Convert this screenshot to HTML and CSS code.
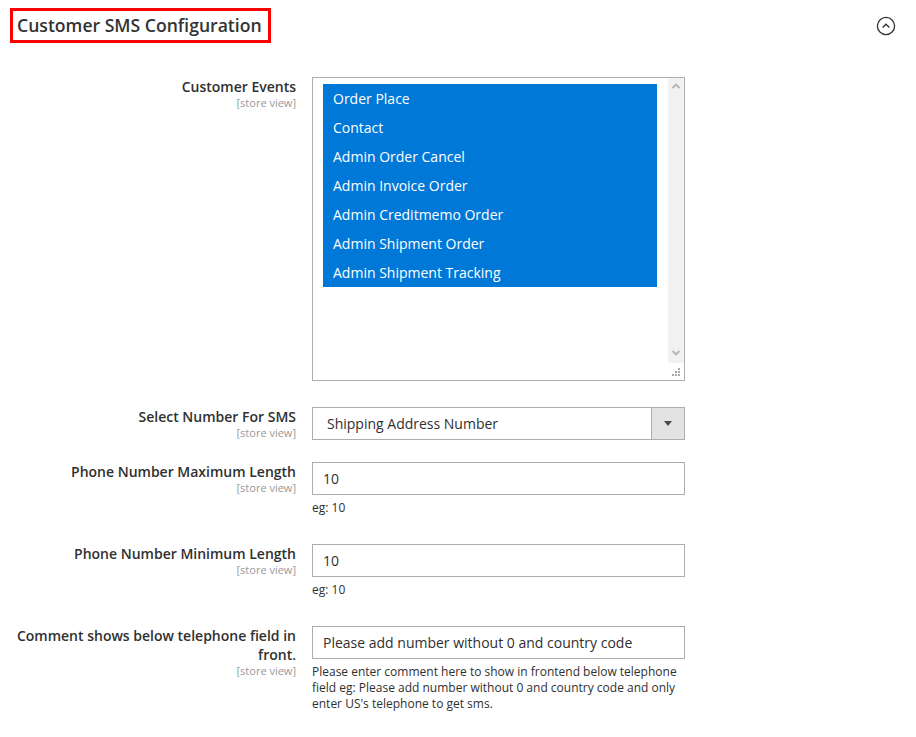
FILE: index.html
```html
<!DOCTYPE html>
<html lang="en">
<head>
    <meta charset="UTF-8">
    <meta name="viewport" content="width=device-width, initial-scale=1.0">
    <title>Customer SMS Configuration</title>
    <link rel="stylesheet" href="styles.css">
</head>
<body>
    <div class="section">
        <div class="section-head">
            <h3 class="section-title">Customer SMS Configuration</h3>
            <span class="toggle">
                <svg width="20" height="20" viewBox="0 0 20 20">
                    <circle cx="10" cy="10" r="8.6" fill="none" stroke="#333" stroke-width="1.3"/>
                    <path d="M6.6 11.6 L10 8.3 L13.4 11.6" fill="none" stroke="#333" stroke-width="1.4"/>
                </svg>
            </span>
        </div>

        <div class="row">
            <div class="label">
                <span class="label-text">Customer Events</span>
                <span class="scope">[store view]</span>
            </div>
            <div class="value">
                <div class="multiselect">
                    <ul class="options">
                        <li>Order Place</li>
                        <li>Contact</li>
                        <li>Admin Order Cancel</li>
                        <li>Admin Invoice Order</li>
                        <li>Admin Creditmemo Order</li>
                        <li>Admin Shipment Order</li>
                        <li>Admin Shipment Tracking</li>
                    </ul>
                    <div class="scrollbar">
                        <div class="track">
                            <svg width="16" height="14" viewBox="0 0 16 14"><path d="M4.5 9 L8 5.5 L11.5 9" fill="none" stroke="#b4b4b4" stroke-width="1.8"/></svg>
                            <svg width="16" height="14" viewBox="0 0 16 14"><path d="M4.5 5 L8 8.5 L11.5 5" fill="none" stroke="#b4b4b4" stroke-width="1.8"/></svg>
                        </div>
                        <div class="corner">
                            <svg width="16" height="17" viewBox="0 0 16 17">
                                <rect x="10" y="5" width="2" height="2" fill="#a8a8a8"/>
                                <rect x="7" y="8" width="2" height="2" fill="#a8a8a8"/>
                                <rect x="10" y="8" width="2" height="2" fill="#a8a8a8"/>
                                <rect x="4" y="11" width="2" height="2" fill="#a8a8a8"/>
                                <rect x="7" y="11" width="2" height="2" fill="#a8a8a8"/>
                                <rect x="10" y="11" width="2" height="2" fill="#a8a8a8"/>
                            </svg>
                        </div>
                    </div>
                </div>
            </div>
        </div>

        <div class="row">
            <div class="label">
                <span class="label-text">Select Number For SMS</span>
                <span class="scope">[store view]</span>
            </div>
            <div class="value">
                <div class="select">
                    <span class="select-text">Shipping Address Number</span>
                    <span class="select-arrow">
                        <svg width="8" height="5" viewBox="0 0 8 5"><path d="M0 0 L8 0 L4 5 Z" fill="#514943"/></svg>
                    </span>
                </div>
            </div>
        </div>

        <div class="row">
            <div class="label">
                <span class="label-text">Phone Number Maximum Length</span>
                <span class="scope">[store view]</span>
            </div>
            <div class="value">
                <div class="input">10</div>
                <p class="note">eg: 10</p>
            </div>
        </div>

        <div class="row">
            <div class="label">
                <span class="label-text">Phone Number Minimum Length</span>
                <span class="scope">[store view]</span>
            </div>
            <div class="value">
                <div class="input">10</div>
                <p class="note">eg: 10</p>
            </div>
        </div>

        <div class="row">
            <div class="label">
                <span class="label-text">Comment shows below telephone field in front.</span>
                <span class="scope">[store view]</span>
            </div>
            <div class="value">
                <div class="input">Please add number without 0 and country code</div>
                <p class="note">Please enter comment here to show in frontend below telephone field eg: Please add number without 0 and country code and only enter US's telephone to get sms.</p>
            </div>
        </div>
    </div>
</body>
</html>
```

FILE: styles.css
```css
*{
    margin: 0;
    padding: 0;
    box-sizing: border-box;
}
body{
    font-family: "Open Sans", "DejaVu Sans", sans-serif;
    color: #303030;
    background: #fff;
}
.section{
    width: 916px;
    padding: 8px 0 0 10px;
}
.section-head{
    display: flex;
    justify-content: space-between;
    align-items: center;
    margin-bottom: 34px;
}
.section-title{
    border: 3px solid #f00;
    padding: 0 6px 0 4px;
    font-size: 17.6px;
    font-weight: 600;
    line-height: 29px;
    color: #333;
}
.toggle{
    display: flex;
    margin-right: 20px;
}
.row{
    display: grid;
    grid-template-columns: 286px 373px;
    column-gap: 16px;
    padding-bottom: 22px;
}
.label{
    display: flex;
    flex-direction: column;
    align-items: flex-end;
    text-align: right;
}
.label-text{
    font-size: 14px;
    font-weight: 600;
    line-height: 19px;
    color: #303030;
}
.scope{
    font-size: 11px;
    line-height: 13px;
    color: #999;
}
.multiselect{
    display: flex;
    height: 304px;
    border: 1px solid #adadad;
    margin-bottom: 4px;
}
.options{
    list-style: none;
    flex: 1;
    padding: 6px 11px 0 10px;
}
.options li{
    height: 29px;
    line-height: 29px;
    padding-left: 10px;
    background: #0078d7;
    color: #fff;
    font-size: 14px;
}
.scrollbar{
    width: 16px;
    display: flex;
    flex-direction: column;
}
.track{
    flex: 1;
    background: #f1f1f1;
    display: flex;
    flex-direction: column;
    justify-content: space-between;
    padding: 1px 0 3px;
}
.corner{
    height: 17px;
    background: #fff;
}
.select{
    display: flex;
    height: 33px;
    border: 1px solid #adadad;
    font-size: 14px;
}
.select-text{
    flex: 1;
    line-height: 31px;
    padding-left: 14px;
}
.select-arrow{
    width: 33px;
    background: #e3e3e3;
    border-left: 1px solid #adadad;
    display: flex;
    align-items: center;
    justify-content: center;
}
.input{
    height: 33px;
    border: 1px solid #adadad;
    padding: 0 10px;
    line-height: 31px;
    font-size: 14px;
}
.note{
    font-size: 12px;
    line-height: 16px;
    margin: 5px 0 6px;
}
```
